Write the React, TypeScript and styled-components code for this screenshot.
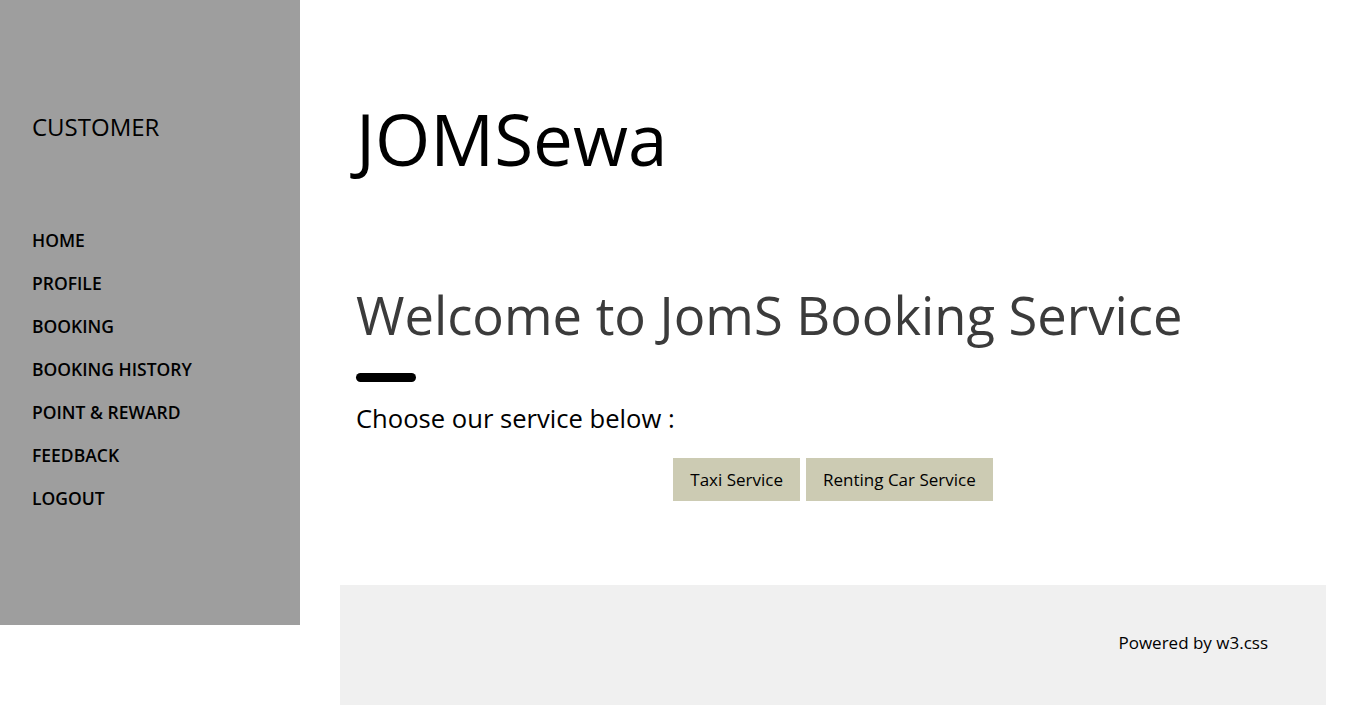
import React from "react";
import styled, { createGlobalStyle } from "styled-components";

const Global = createGlobalStyle`
  html, body { margin: 0; padding: 0; background: #fff; }
  body { font-family: "Open Sans", "Noto Sans", sans-serif; color: #000; }
  * { box-sizing: border-box; }
`;

const Page = styled.div`
  display: flex;
  align-items: flex-start;
  width: 1366px;
  height: 705px;
  overflow: hidden;
`;

const Sidebar = styled.nav`
  width: 300px;
  height: 625px;
  flex: none;
  background: #9e9e9e;
  padding: 111px 32px 0;
`;

const SideTitle = styled.h3`
  margin: 0 0 76px;
  font-size: 24px;
  font-weight: 500;
  line-height: 32px;
`;

const NavList = styled.div`
  display: flex;
  flex-direction: column;
`;

const NavLink = styled.a`
  display: block;
  font-size: 17.5px;
  font-weight: 600;
  line-height: 43px;
  color: #000;
  text-decoration: none;
`;

const Main = styled.main`
  flex: 1;
  padding: 0 40px;
  display: flex;
  flex-direction: column;
`;

const Header = styled.header`
  padding: 94px 16px 0;
  height: 280px;
`;

const Brand = styled.h1`
  margin: 0;
  font-size: 71px;
  font-weight: 500;
  line-height: 90px;
`;

const Section = styled.section`
  padding: 0 16px;
  height: 305px;
`;

const Welcome = styled.h1`
  margin: 0;
  font-size: 52.5px;
  font-weight: 500;
  line-height: 70px;
  color: #3b3b3b;
`;

const Bar = styled.div`
  width: 60px;
  height: 9px;
  border-radius: 5px;
  background: #000;
  margin: 23px 0 21px;
`;

const Lead = styled.p`
  margin: 0;
  font-size: 25.6px;
  line-height: 32px;
`;

const Buttons = styled.div`
  display: flex;
  justify-content: center;
  gap: 6px;
  margin-top: 23px;
`;

const ServiceButton = styled.button`
  border: none;
  background: #cccbb3;
  font-family: inherit;
  font-size: 17px;
  color: #000;
  height: 43px;
  padding: 0 17px;
`;

const Footer = styled.footer`
  background: #f0f0f0;
  height: 120px;
  padding: 46px 58px 0;
  display: flex;
  justify-content: flex-end;
`;

const FooterText = styled.p`
  margin: 0;
  font-size: 17px;
  line-height: 24px;
`;

export default function App() {
  const nav = ["HOME", "PROFILE", "BOOKING", "BOOKING HISTORY", "POINT & REWARD", "FEEDBACK", "LOGOUT"];
  return (
    <>
      <Global />
      <Page>
        <Sidebar>
          <SideTitle>CUSTOMER</SideTitle>
          <NavList>
            {nav.map((n) => (
              <NavLink key={n} href="#">{n}</NavLink>
            ))}
          </NavList>
        </Sidebar>
        <Main>
          <Header>
            <Brand>JOMSewa</Brand>
          </Header>
          <Section>
            <Welcome>Welcome to JomS Booking Service</Welcome>
            <Bar />
            <Lead>Choose our service below :</Lead>
            <Buttons>
              <ServiceButton>Taxi Service</ServiceButton>
              <ServiceButton>Renting Car Service</ServiceButton>
            </Buttons>
          </Section>
          <Footer>
            <FooterText>Powered by w3.css</FooterText>
          </Footer>
        </Main>
      </Page>
    </>
  );
}
